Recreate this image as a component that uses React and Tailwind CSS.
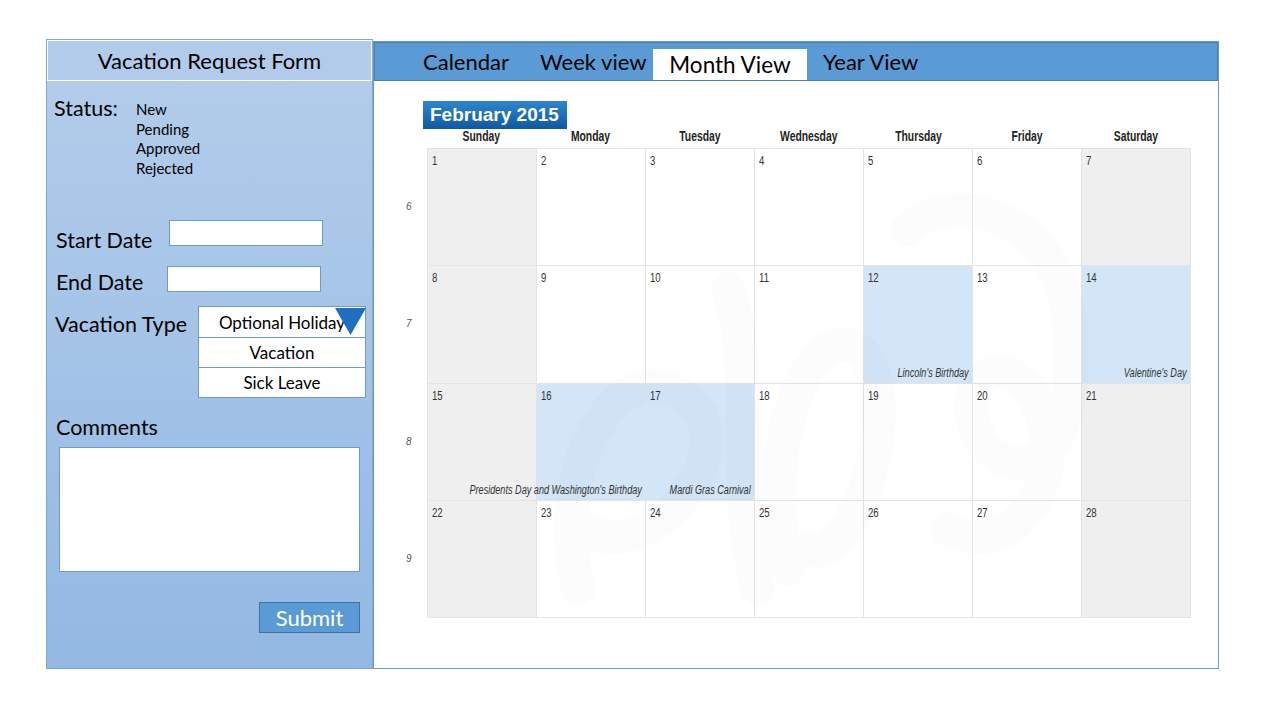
import { useState } from 'react';

const FORM_FONT = "font-['Lato','Open_Sans',sans-serif]";
const CAL_FONT = "font-['Liberation_Sans',Arial,sans-serif]";

const DAYS = ['Sunday', 'Monday', 'Tuesday', 'Wednesday', 'Thursday', 'Friday', 'Saturday'];
const WEEKS = [6, 7, 8, 9];

// holidays keyed by day of month
const EVENTS = {
  12: "Lincoln's Birthday",
  14: "Valentine's Day",
  16: "Presidents Day and Washington's Birthday",
  17: 'Mardi Gras Carnival',
};

const STATUSES = ['New', 'Pending', 'Approved', 'Rejected'];
const TYPES = ['Optional Holiday', 'Vacation', 'Sick Leave'];
const TABS = ['Calendar', 'Week view', 'Month View', 'Year View'];

function RequestForm() {
  const [type, setType] = useState('Optional Holiday');

  return (
    <div className={`w-[327px] h-[630px] flex flex-col border border-[#7ea6cf] bg-gradient-to-b from-[#b4ceeb] to-[#93b8e3] text-black ${FORM_FONT}`}>
      {/* Header */}
      <div className="h-[41px] border border-white bg-[#b2cbea] flex items-center justify-center text-[22px]">
        Vacation Request Form
      </div>

      {/* Status */}
      <div className="mt-[15px] ml-[7px] flex items-start">
        <span className="w-[82px] text-[21.5px] leading-[24px]">Status:</span>
        <ul className="pt-[4px] text-[15px] leading-[19.5px]">
          {STATUSES.map(s => <li key={s}>{s}</li>)}
        </ul>
      </div>

      {/* Dates */}
      <div className="mt-[42px] ml-[9px] flex items-start">
        <span className="w-[113px] pt-[8px] text-[21.5px] leading-[24px]">Start Date</span>
        <div className="w-[154px] h-[26px] bg-white border border-[#6f9bc8]" />
      </div>
      <div className="mt-[14px] ml-[9px] flex items-start">
        <span className="w-[111px] pt-[4px] text-[21.5px] leading-[24px]">End Date</span>
        <div className="w-[154px] h-[26px] bg-white border border-[#6f9bc8]" />
      </div>

      {/* Vacation type */}
      <div className="mt-[12px] ml-[8px] flex items-start">
        <span className="w-[143px] pt-[6px] text-[21.5px] leading-[24px]">Vacation Type</span>
        <div className="relative w-[168px] bg-white border border-[#6f9bc8] text-[17px]">
          {TYPES.map((t, i) => (
            <button key={t} onClick={() => setType(t)}
                    className={`block w-full h-[30px] leading-[29px] text-center ${i > 0 ? 'border-t border-[#6f9bc8]' : ''} ${type === t && i > 0 ? 'bg-[#eef4fb]' : ''}`}>
              {t}
            </button>
          ))}
          <svg className="absolute right-[-1px] top-[1px]" width="31" height="27" viewBox="0 0 31 27">
            <polygon points="0,0 31,0 15.5,27" fill="#1f6fbf" />
          </svg>
        </div>
      </div>

      {/* Comments */}
      <div className="mt-[17px] ml-[9px] text-[21.5px] leading-[24px]">Comments</div>
      <div className="mt-[8px] ml-[12px] w-[301px] h-[125px] bg-white border border-[#6f9bc8]" />

      <button className="mt-[30px] mr-[12px] self-end w-[101px] h-[31px] bg-[#5b9bd5] border border-[#41719c] text-white text-[22px] leading-[28px]">
        Submit
      </button>
    </div>
  );
}

function DayCell({ day, col }) {
  const weekend = col === 0 || col === 6;
  const event = EVENTS[day];
  const bg = event ? 'bg-[#d3e6f8]' : weekend ? 'bg-[#efefef]' : 'bg-white';
  return (
    <div className={`relative ${bg}`}>
      <span className="absolute left-[4px] top-[6px] text-[12px] leading-[13px] text-[#333] origin-left scale-x-[0.8]">{day}</span>
      {event && (
        <span className="absolute right-[3px] bottom-[3px] whitespace-nowrap italic text-[12px] leading-[13px] text-[#333] origin-right scale-x-[0.76]">
          {event}
        </span>
      )}
    </div>
  );
}

function MonthCalendar() {
  const [tab, setTab] = useState('Month View');
  const widths = { 'Calendar': 'w-[117px]', 'Week view': 'w-[113px]' };

  return (
    <div className="mt-[2px] w-[846px] h-[628px] border border-[#6d9ac6] bg-white flex flex-col">
      {/* Tabs */}
      <div className={`h-[39px] bg-[#5b9bd5] border border-[#4a7eb3] flex pl-[48px] text-[22px] ${FORM_FONT}`}>
        {TABS.map(t => t === tab ? (
          <button key={t} onClick={() => setTab(t)}
                  className="self-end h-[31px] w-[154px] bg-white text-black text-[22.5px] leading-[31px] text-center">
            {t}
          </button>
        ) : (
          <button key={t} onClick={() => setTab(t)}
                  className={`h-full text-left leading-[37px] text-black ${widths[t] ?? 'ml-[16px]'}`}>
            {t}
          </button>
        ))}
      </div>

      {/* Month view */}
      <div className={`relative flex flex-col pl-[26px] ${CAL_FONT}`}>
        <div className="ml-[23px] mt-[20px] w-[144px] h-[28px] bg-gradient-to-b from-[#2f86cf] to-[#0f58a3] text-white font-bold text-[19px] leading-[28px] pl-[7px]">
          February 2015
        </div>

        <div className="ml-[27px] w-[764px] h-[19px] grid grid-cols-7 text-[14px] leading-[15px] font-bold text-[#222]">
          {DAYS.map(d => (
            <div key={d} className="text-center">
              <span className="inline-block scale-x-[0.74]">{d}</span>
            </div>
          ))}
        </div>

        <div className="flex">
          <div className="w-[27px] flex flex-col">
            {WEEKS.map(w => (
              <div key={w} className="h-[117.25px] flex items-center pl-[6px] italic text-[10px] text-[#555]">{w}</div>
            ))}
          </div>
          <div className="relative w-[764px] h-[470px] grid grid-cols-7 grid-rows-4 gap-px bg-[#e4e4e4] border border-[#e4e4e4]">
            {Array.from({ length: 28 }, (_, i) => <DayCell key={i} day={i + 1} col={i % 7} />)}
            {/* faint watermark */}
            <svg className="absolute inset-0 pointer-events-none" width="764" height="470" viewBox="0 0 764 470">
              <g fill="none" stroke="#000" strokeOpacity="0.012" strokeWidth="34" strokeLinecap="round">
                <path d="M150 440 C120 300 200 200 260 250 C320 300 220 420 160 380" />
                <path d="M300 140 C330 220 300 330 330 440" />
                <path d="M360 420 C330 300 380 170 430 200 C480 240 430 420 380 400" />
                <path d="M520 380 C600 420 650 300 600 240 C560 190 520 260 560 300 C600 340 660 300 640 160 C620 60 520 40 480 80" />
              </g>
            </svg>
          </div>
        </div>
      </div>
    </div>
  );
}

export default function App() {
  return (
    <div className="w-[1280px] h-[720px] bg-white flex items-start pt-[39px] pl-[46px]">
      <RequestForm />
      <MonthCalendar />
    </div>
  );
}
